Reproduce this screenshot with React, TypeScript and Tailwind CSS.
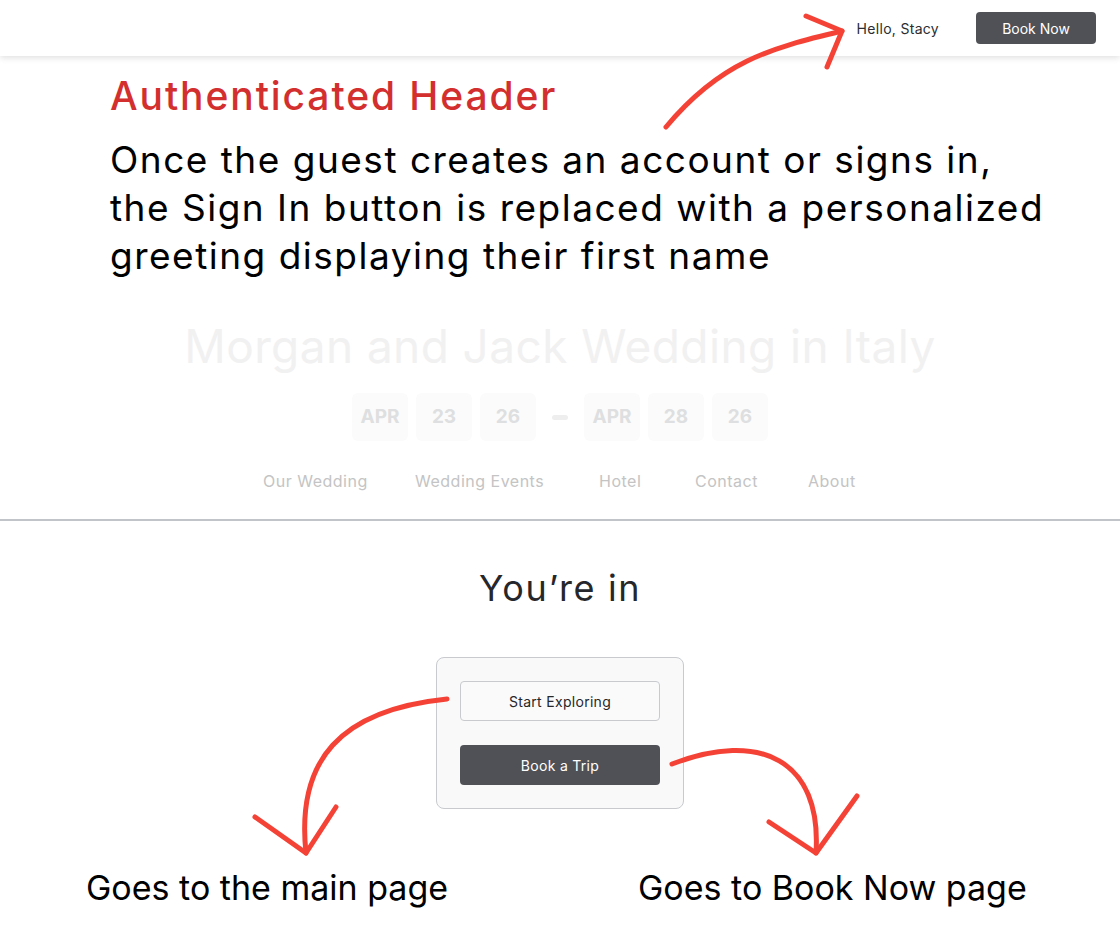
import React from 'react';

const dates = [
  ['APR', '23', '26'],
  ['APR', '28', '26'],
];

const navLinks = [
  { label: 'Our Wedding', className: 'w-[152px]' },
  { label: 'Wedding Events', className: 'w-[184px]' },
  { label: 'Hotel', className: 'w-[96px]' },
  { label: 'Contact', className: 'w-[113px]' },
  { label: 'About', className: '' },
];

function DateBox({ value }: { value: string }) {
  return (
    <div className="w-14 h-12 flex items-center justify-center rounded-md bg-[#fbfbfb] text-[19px] font-bold text-[#dedfe0]">
      {value}
    </div>
  );
}

// red hand-drawn annotation arrows sitting over the mockup
function Arrows() {
  return (
    <svg
      className="absolute inset-0 z-20 pointer-events-none"
      width="1120"
      height="946"
      viewBox="0 0 1120 946"
      fill="none"
      stroke="#f44336"
      strokeWidth="5"
      strokeLinecap="round"
      strokeLinejoin="round"
    >
      {/* header arrow */}
      <path d="M666 127 C 720 62, 770 48, 842 31" />
      <path d="M806 16 L842 31 L827 67" />
      {/* start exploring arrow */}
      <path d="M447 699 C 340 710, 296 760, 306 853" />
      <path d="M255 817 L306 853 L336 807" />
      {/* book a trip arrow */}
      <path d="M672 764 C 760 730, 822 760, 816 853" />
      <path d="M769 822 L816 853 L857 796" />
    </svg>
  );
}

export default function App() {
  return (
    <div className="relative w-[1120px] h-[946px] bg-white overflow-hidden font-['Inter',sans-serif]">
      {/* Header */}
      <header className="h-14 flex items-center justify-end pr-6 bg-white shadow-[0_2px_6px_rgba(0,0,0,0.12)] relative z-10">
        <span className="text-[14px] tracking-[0.3px] text-[#2b2d31]">Hello, Stacy</span>
        <button className="ml-[37px] w-[120px] h-8 rounded bg-[#4f5156] text-white text-[14px]">
          Book Now
        </button>
      </header>

      {/* Annotation */}
      <div className="pl-[110px] pt-4">
        <h2 className="text-[39px] leading-[48px] text-[#d32f2f] font-medium tracking-[1.9px]">
          Authenticated Header
        </h2>
        <p className="mt-4 text-[37px] leading-[48px] text-black tracking-[1.5px]">
          Once the guest creates an account or signs in,
          <br />
          the Sign In button is replaced with a personalized
          <br />
          greeting displaying their first name
        </p>
      </div>

      {/* Faded page content */}
      <h1 className="mt-[38px] text-center text-[46px] leading-[56px] tracking-[0.4px] text-[#f1f1f1]">
        Morgan and Jack Wedding in Italy
      </h1>

      <div className="mt-[19px] flex items-center justify-center">
        <div className="flex gap-2">
          {dates[0].map((d, i) => (
            <DateBox key={i} value={d} />
          ))}
        </div>
        <div className="mx-4 w-4 h-[5px] rounded-sm bg-[#eeeeee]" />
        <div className="flex gap-2">
          {dates[1].map((d, i) => (
            <DateBox key={i} value={d} />
          ))}
        </div>
      </div>

      <nav className="mt-7 flex pl-[263px] text-[16px] leading-6 tracking-[0.5px] text-[#c4c4c4]">
        {navLinks.map((link) => (
          <div key={link.label} className={link.className}>
            <a>{link.label}</a>
          </div>
        ))}
      </nav>

      <div className="mt-[26px] h-[2px] bg-[#c1c4c8]" />

      {/* Signed in */}
      <h3 className="mt-[45px] text-center text-[36px] leading-[44px] tracking-[1.6px] text-[#26272b]">
        You’re in
      </h3>

      <div className="mt-[47px] mx-auto w-[248px] rounded-lg border border-[#c8cacd] bg-[#f9f9fa] px-[23px] pt-[23px] pb-[23px] flex flex-col gap-6">
        <button className="h-10 rounded border border-[#c8cacd] bg-[#fafafa] text-[14px] tracking-[0.3px] text-[#26272b]">
          Start Exploring
        </button>
        <button className="h-10 rounded bg-[#4f5156] text-[14px] tracking-[0.3px] text-white">
          Book a Trip
        </button>
      </div>

      {/* Bottom labels */}
      <div className="mt-[59px] flex text-[34px] leading-10 text-black">
        <div className="w-[638px] pl-[86px]">Goes to the main page</div>
        <div>Goes to Book Now page</div>
      </div>

      <Arrows />
    </div>
  );
}
